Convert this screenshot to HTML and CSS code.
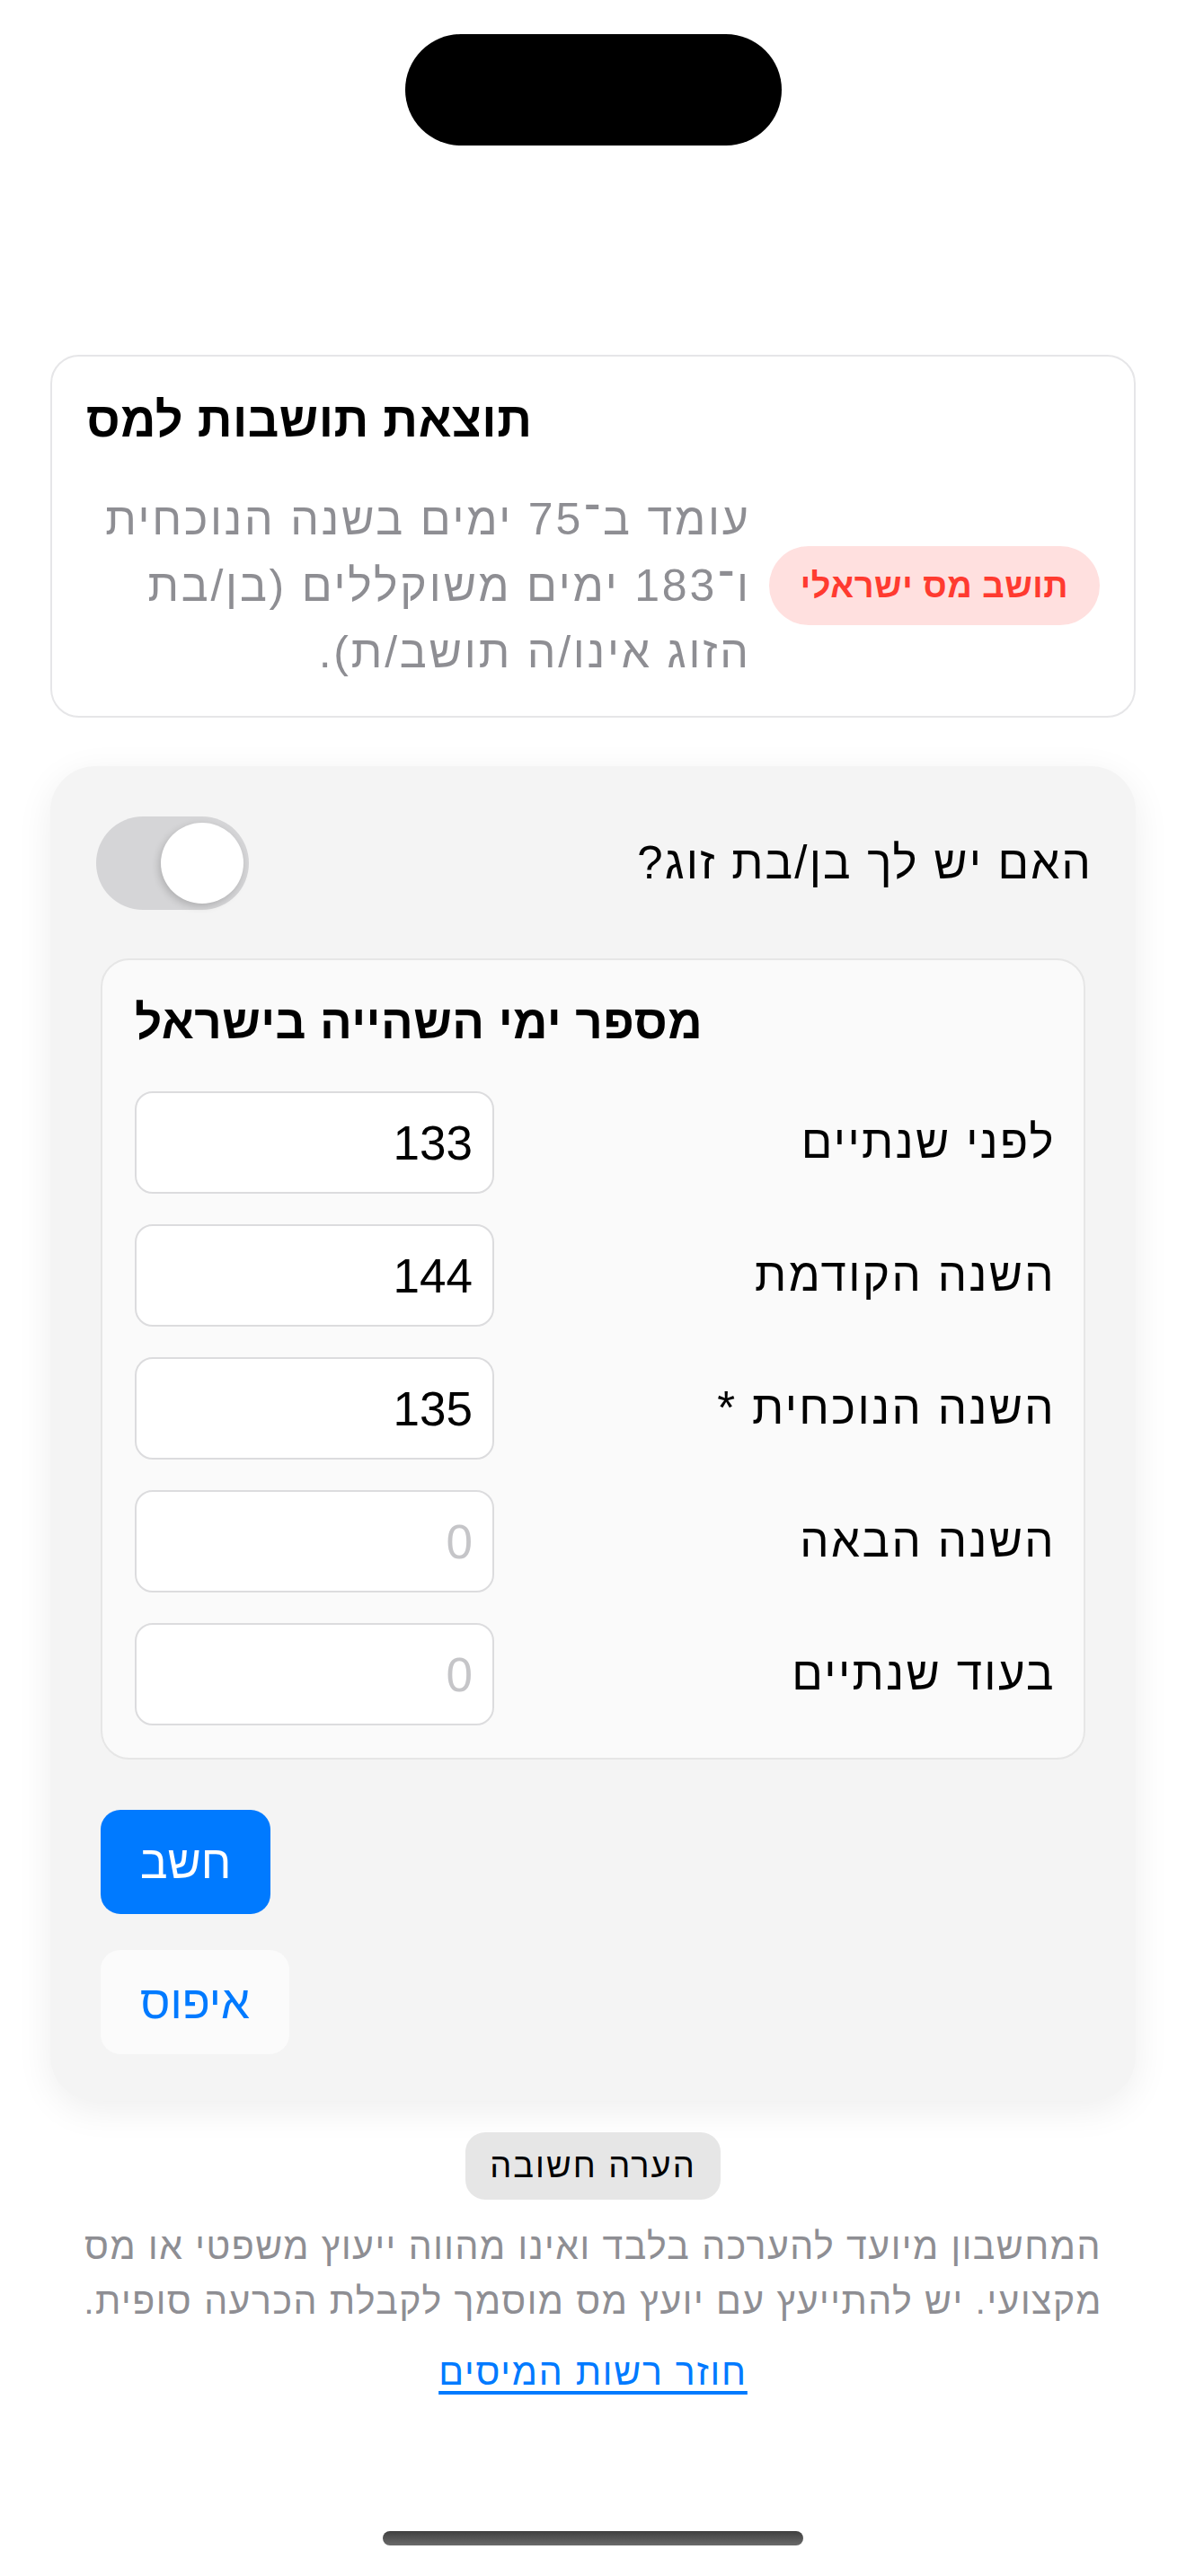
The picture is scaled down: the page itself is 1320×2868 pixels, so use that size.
FILE: index.html
```html
<!DOCTYPE html>
<html lang="he">
<head>
<meta charset="utf-8">
<title>תושבות למס</title>
<link rel="stylesheet" href="styles.css">
</head>
<body>
<div class="screen">
  <div class="island"></div>
  <main class="content">
    <section class="result-card">
      <h2 class="result-title" dir="rtl">תוצאת תושבות למס</h2>
      <div class="result-row">
        <p class="result-desc" dir="rtl">עומד ב־75 ימים בשנה הנוכחית<br>ו־183 ימים משוקללים (בן/בת<br>הזוג אינו/ה תושב/ת).</p>
        <span class="badge" dir="rtl">תושב מס ישראלי</span>
      </div>
    </section>

    <section class="form-card">
      <div class="toggle-row">
        <div class="switch"><span class="knob"></span></div>
        <span class="toggle-label" dir="rtl">האם יש לך בן/בת זוג?</span>
      </div>

      <div class="days-card">
        <h3 class="days-title" dir="rtl">מספר ימי השהייה בישראל</h3>
        <div class="days-list">
          <div class="day-row">
            <input class="day-input" type="text" value="133" placeholder="0">
            <span class="day-label" dir="rtl">לפני שנתיים</span>
          </div>
          <div class="day-row">
            <input class="day-input" type="text" value="144" placeholder="0">
            <span class="day-label" dir="rtl">השנה הקודמת</span>
          </div>
          <div class="day-row">
            <input class="day-input" type="text" value="135" placeholder="0">
            <span class="day-label" dir="rtl">השנה הנוכחית *</span>
          </div>
          <div class="day-row">
            <input class="day-input" type="text" value="" placeholder="0">
            <span class="day-label" dir="rtl">השנה הבאה</span>
          </div>
          <div class="day-row">
            <input class="day-input" type="text" value="" placeholder="0">
            <span class="day-label" dir="rtl">בעוד שנתיים</span>
          </div>
        </div>
      </div>

      <div class="actions">
        <button class="btn btn-primary" type="button">חשב</button>
        <button class="btn btn-secondary" type="button">איפוס</button>
      </div>
    </section>

    <div class="note-pill" dir="rtl">הערה חשובה</div>
    <p class="disclaimer" dir="rtl">המחשבון מיועד להערכה בלבד ואינו מהווה ייעוץ משפטי או מס<br>מקצועי. יש להתייעץ עם יועץ מס מוסמך לקבלת הכרעה סופית.</p>
    <div class="link-wrap"><a class="doc-link" href="#" dir="rtl">חוזר רשות המיסים</a></div>
  </main>
  <div class="home-indicator"></div>
</div>
</body>
</html>
```

FILE: styles.css
```css
* {
  box-sizing: border-box;
}

html, body {
  margin: 0;
  padding: 0;
  background: #ffffff;
}

body {
  font-family: "Liberation Sans", Arial, "DejaVu Sans", sans-serif;
  color: #000000;
}

.screen {
  position: relative;
  width: 1320px;
  min-height: 2868px;
  overflow: hidden;
  background: #ffffff;
}

.island {
  width: 419px;
  height: 124px;
  margin: 38px auto 0;
  border-radius: 62px;
  background: #000000;
}

.content {
  padding: 0 56px;
  margin-top: 233px;
  display: flex;
  flex-direction: column;
}

/* Result card */
.result-card {
  border: 2px solid #e6e6e8;
  border-radius: 32px;
  background: #ffffff;
  padding: 36px 38px 34px;
}

.result-title {
  margin: 0;
  font-size: 54px;
  line-height: 68px;
  font-weight: 700;
  letter-spacing: 0.5px;
  text-align: left;
}

.result-row {
  margin-top: 40px;
  display: flex;
  align-items: center;
}

.result-desc {
  flex: 1;
  margin: 0 20px 0 0;
  font-size: 50px;
  line-height: 74px;
  letter-spacing: 2.8px;
  color: #8e8e93;
  text-align: right;
}

.badge {
  flex: none;
  height: 88px;
  padding: 0 35px;
  border-radius: 44px;
  background: #ffe0df;
  color: #ff3b30;
  font-size: 38px;
  font-weight: 700;
  letter-spacing: 0.5px;
  display: flex;
  align-items: center;
}

/* Form card */
.form-card {
  margin-top: 54px;
  background: #f4f4f4;
  border-radius: 50px;
  padding: 56px 56px 52px;
  box-shadow: 0 10px 40px rgba(0, 0, 0, 0.07);
}

.toggle-row {
  display: flex;
  justify-content: space-between;
  align-items: center;
  height: 104px;
}

.switch {
  position: relative;
  width: 170px;
  height: 104px;
  margin-left: -5px;
  border-radius: 52px;
  background: #d5d5d7;
}

.knob {
  position: absolute;
  top: 7px;
  right: 6px;
  width: 92px;
  height: 90px;
  border-radius: 50%;
  background: #ffffff;
  box-shadow: -2px 3px 8px rgba(0, 0, 0, 0.18);
}

.toggle-label {
  margin-right: -8px;
  font-size: 51px;
  line-height: 60px;
  letter-spacing: 2.2px;
}

.days-card {
  margin-top: 54px;
  background: #fafafa;
  border: 2px solid #e6e6e6;
  border-radius: 32px;
  padding: 36px 36px 36px;
}

.days-title {
  margin: 0;
  font-size: 53px;
  line-height: 66px;
  font-weight: 700;
  letter-spacing: 0.4px;
  text-align: left;
}

.days-list {
  margin-top: 44px;
  display: flex;
  flex-direction: column;
  gap: 34px;
}

.day-row {
  display: flex;
  justify-content: space-between;
  align-items: center;
}

.day-input {
  width: 400px;
  height: 114px;
  padding: 0 22px;
  border: 2px solid #dcdcde;
  border-radius: 20px;
  background: #ffffff;
  font-family: "Liberation Sans", Arial, sans-serif;
  font-size: 53px;
  color: #000000;
  text-align: right;
  direction: ltr;
  outline: none;
}

.day-input::placeholder {
  color: #c5c5c8;
}

.day-label {
  margin-right: -5px;
  font-size: 51px;
  line-height: 60px;
  letter-spacing: 2.4px;
}

.actions {
  margin-top: 56px;
  display: flex;
  flex-direction: column;
  align-items: flex-start;
  gap: 40px;
}

.btn {
  height: 116px;
  padding: 0 44px;
  border: none;
  border-radius: 22px;
  font-family: "Liberation Sans", Arial, sans-serif;
  font-size: 51px;
  cursor: pointer;
}

.btn-primary {
  background: #007aff;
  color: #ffffff;
}

.btn-secondary {
  background: #fbfbfb;
  color: #007aff;
}

/* Footer note */
.note-pill {
  align-self: center;
  margin-top: 35px;
  height: 75px;
  padding: 0 27px;
  border-radius: 22px;
  background: #e6e6e6;
  font-size: 38px;
  letter-spacing: 2px;
  display: flex;
  align-items: center;
}

.disclaimer {
  margin: 22px -40px 0;
  font-size: 41px;
  line-height: 61px;
  letter-spacing: 1.5px;
  color: #8e8e93;
  text-align: center;
}

.link-wrap {
  margin-top: 18px;
  text-align: center;
  font-size: 41px;
  line-height: 61px;
}

.doc-link {
  color: #007aff;
  letter-spacing: 1.8px;
  text-decoration: underline;
  text-decoration-thickness: 4px;
  text-underline-offset: 7px;
}

.home-indicator {
  position: absolute;
  left: 426px;
  top: 2818px;
  width: 468px;
  height: 16px;
  border-radius: 8px;
  background: linear-gradient(#3f3f3f, #6a6a6a);
}
```
